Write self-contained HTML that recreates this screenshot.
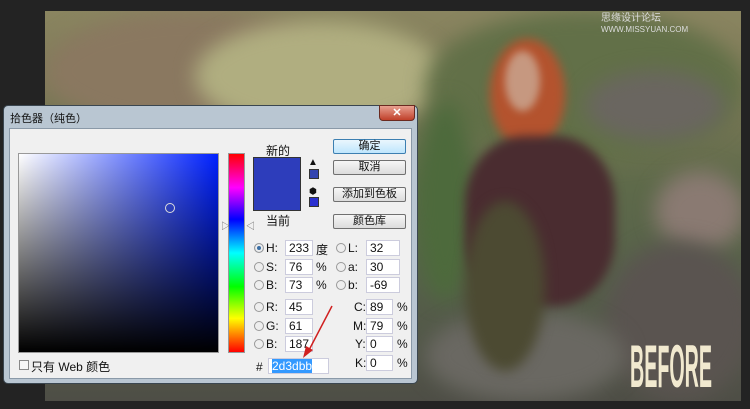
<!DOCTYPE html>
<html><head><meta charset="utf-8"><style>
*{margin:0;padding:0;box-sizing:border-box}
body{width:750px;height:409px;background:#232323;position:relative;overflow:hidden;font-family:"Liberation Sans","Noto Sans CJK SC",sans-serif;font-size:11px;color:#111}
.photo{position:absolute;left:45px;top:11px;width:696px;height:390px;overflow:hidden;
background:linear-gradient(180deg,#8a8560 0%,#7e7a58 20%,#5e6a4a 45%,#56604a 70%,#4e4e46 100%)}
.b{position:absolute;border-radius:50%;filter:blur(10px)}
.dlg{position:absolute;left:3px;top:105px;width:415px;height:279px;background:#b9c6d2;border:1px solid #3a4650;border-radius:5px}
.title{position:absolute;left:6px;top:4px;font-size:11px}
.close{position:absolute;left:375px;top:-1px;width:36px;height:16px;background:linear-gradient(#e8a090,#c0402a);border:1px solid #6a2a20;border-radius:0 0 4px 4px;color:#fff;text-align:center;font-weight:bold;font-size:11px;line-height:14px}
.inner{position:absolute;left:5px;top:22px;width:403px;height:251px;background:#f0f0f0;border:1px solid #8a99a8}
.a{position:absolute}
.field{position:absolute;height:16px;background:#fff;border:1px solid #ccd;font-size:12px;padding-left:3px;line-height:14px}
.btn{position:absolute;left:331px;width:73px;height:15px;border:1px solid #707070;border-radius:2px;background:linear-gradient(#f6f6f6,#dcdcdc);text-align:center;font-size:11px;line-height:13px}
.rad{position:absolute;width:10px;height:10px;border-radius:50%;border:1px solid #999;background:#eee}
.lbl{position:absolute;font-size:12px}
</style></head><body>
<div class="photo">
<div class="b" style="left:0;top:0;width:300px;height:120px;background:#8a7860"></div>
<div class="b" style="left:150px;top:10px;width:250px;height:110px;background:#b0ae80"></div>
<div class="b" style="left:380px;top:0;width:320px;height:150px;background:#627048"></div>
<div class="b" style="left:540px;top:60px;width:140px;height:70px;background:#6a6660"></div>
<div class="b" style="left:610px;top:160px;width:90px;height:80px;background:#8a7a72"></div>
<div class="b" style="left:370px;top:90px;width:60px;height:200px;background:#4d6a3c"></div>
<div class="b" style="left:560px;top:230px;width:150px;height:160px;background:#5a5450"></div>
<div class="b" style="left:380px;top:300px;width:200px;height:90px;background:#6a6862"></div>
<div class="b" style="left:445px;top:28px;width:75px;height:110px;background:#b4532e;filter:blur(5px)"></div>
<div class="b" style="left:460px;top:40px;width:35px;height:60px;background:#c69880;filter:blur(4px)"></div>
<div class="b" style="left:420px;top:125px;width:150px;height:170px;background:#4a2c30;border-radius:40%;filter:blur(5px)"></div>
<div class="b" style="left:420px;top:190px;width:80px;height:170px;background:#4c4a32;filter:blur(6px)"></div>
<svg class="a" style="left:585px;top:330px" width="90" height="50"><text x="0" y="46" font-family="Liberation Sans, sans-serif" font-weight="bold" font-size="60" fill="#f1e9cf" textLength="82" lengthAdjust="spacingAndGlyphs">BEFORE</text></svg>
<div class="a" style="left:556px;top:-2px;font-size:10px;color:#dcdcdc">思缘设计论坛 <span style="font-size:8px">WWW.MISSYUAN.COM</span></div>
</div>
<div class="dlg">
<div class="title">拾色器（纯色）</div>
<div class="close">✕</div>
<div class="inner">
<div class="a" style="left:8px;top:24px;width:201px;height:200px;border:1px solid #999;background:linear-gradient(to bottom,rgba(0,0,0,0),#000),linear-gradient(to right,#fff,#0021ff)"></div>
<div class="a" style="left:155px;top:74px;width:10px;height:10px;border:1px solid #ddd;border-radius:50%"></div>
<div class="a" style="left:218px;top:24px;width:17px;height:200px;border:1px solid #999;background:linear-gradient(#f00,#f0f 17%,#00f 33%,#0ff 50%,#0f0 67%,#ff0 83%,#f00)"></div>
<div class="a" style="left:211px;top:90px;font-size:9px;color:#666">▷</div>
<div class="a" style="left:236px;top:90px;font-size:9px;color:#666">◁</div>
<div class="lbl" style="left:256px;top:13px">新的</div>
<div class="a" style="left:243px;top:28px;width:48px;height:54px;background:#2d3dbb;border:1px solid #333"></div>
<div class="lbl" style="left:256px;top:83px">当前</div>
<div class="a" style="left:298px;top:28px;font-size:10px">▲</div>
<div class="a" style="left:299px;top:40px;width:10px;height:10px;background:#3344b0;border:1px solid #333"></div>
<div class="a" style="left:299px;top:57px;font-size:9px">⬢</div>
<div class="a" style="left:299px;top:68px;width:10px;height:10px;background:#2a30d0;border:1px solid #333"></div>
<div class="btn" style="left:323px;top:10px;border-color:#3c7fb1;background:linear-gradient(#eaf6fd,#bee6fd)">确定</div>
<div class="btn" style="left:323px;top:31px">取消</div>
<div class="btn" style="left:323px;top:58px">添加到色板</div>
<div class="btn" style="left:323px;top:85px">颜色库</div>
<div class="rad" style="left:244px;top:114px;background:#3a6ea5;box-shadow:inset 0 0 0 2px #eee"></div><div class="lbl" style="left:256px;top:112px">H:</div><div class="field" style="left:275px;top:111px;width:28px">233</div><div class="lbl" style="left:306px;top:112px">度</div>
<div class="rad" style="left:244px;top:133px"></div><div class="lbl" style="left:256px;top:131px">S:</div><div class="field" style="left:275px;top:130px;width:28px">76</div><div class="lbl" style="left:306px;top:131px">%</div>
<div class="rad" style="left:244px;top:151px"></div><div class="lbl" style="left:256px;top:149px">B:</div><div class="field" style="left:275px;top:148px;width:28px">73</div><div class="lbl" style="left:306px;top:149px">%</div>
<div class="rad" style="left:326px;top:114px"></div><div class="lbl" style="left:338px;top:112px">L:</div><div class="field" style="left:356px;top:111px;width:34px">32</div>
<div class="rad" style="left:326px;top:133px"></div><div class="lbl" style="left:338px;top:131px">a:</div><div class="field" style="left:356px;top:130px;width:34px">30</div>
<div class="rad" style="left:326px;top:151px"></div><div class="lbl" style="left:338px;top:149px">b:</div><div class="field" style="left:356px;top:148px;width:34px">-69</div>
<div class="rad" style="left:244px;top:173px"></div><div class="lbl" style="left:256px;top:171px">R:</div><div class="field" style="left:275px;top:170px;width:28px">45</div>
<div class="rad" style="left:244px;top:192px"></div><div class="lbl" style="left:256px;top:190px">G:</div><div class="field" style="left:275px;top:189px;width:28px">61</div>
<div class="rad" style="left:244px;top:210px"></div><div class="lbl" style="left:256px;top:208px">B:</div><div class="field" style="left:275px;top:207px;width:28px">187</div>
<div class="lbl" style="left:344px;top:171px">C:</div><div class="field" style="left:356px;top:170px;width:27px">89</div><div class="lbl" style="left:387px;top:171px">%</div>
<div class="lbl" style="left:343px;top:190px">M:</div><div class="field" style="left:356px;top:189px;width:27px">79</div><div class="lbl" style="left:387px;top:190px">%</div>
<div class="lbl" style="left:345px;top:208px">Y:</div><div class="field" style="left:356px;top:207px;width:27px">0</div><div class="lbl" style="left:387px;top:208px">%</div>
<div class="lbl" style="left:345px;top:227px">K:</div><div class="field" style="left:356px;top:226px;width:27px">0</div><div class="lbl" style="left:387px;top:227px">%</div>
<div class="lbl" style="left:246px;top:231px">#</div>
<div class="field" style="left:258px;top:229px;width:61px"><span style="background:#3399ff;color:#fff">2d3dbb</span></div>
<svg class="a" style="left:290px;top:175px" width="40" height="55"><line x1="32" y1="2" x2="8" y2="48" stroke="#d02020" stroke-width="1.5"/><polygon points="3,54 6,42 13,46" fill="#d02020"/></svg>
<div class="a" style="left:9px;top:231px;width:10px;height:10px;border:1px solid #888;background:#f6f6f6"></div>
<div class="lbl" style="left:21px;top:229px">只有 Web 颜色</div>
</div>
</div>
</body></html>
